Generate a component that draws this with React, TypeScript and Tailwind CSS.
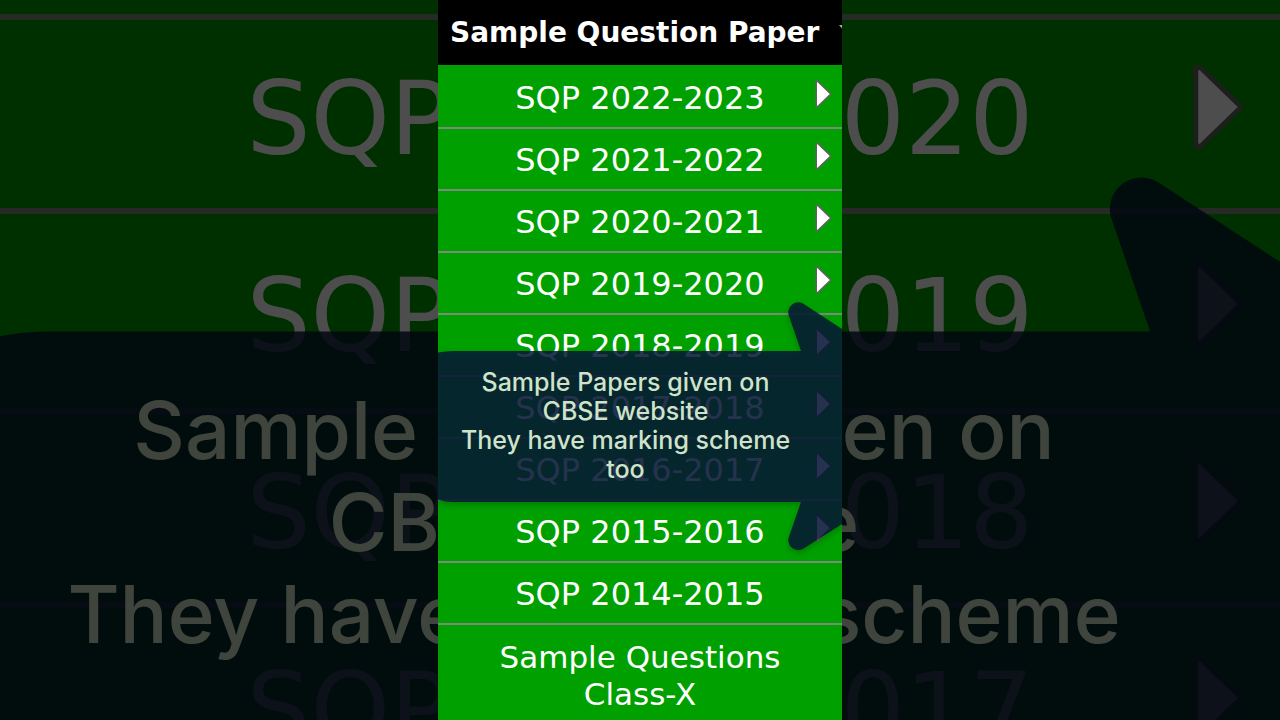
type Entry = { label: string; submenu: boolean };

const papers: Entry[] = [
  { label: "SQP 2022-2023", submenu: true },
  { label: "SQP 2021-2022", submenu: true },
  { label: "SQP 2020-2021", submenu: true },
  { label: "SQP 2019-2020", submenu: true },
  { label: "SQP 2018-2019", submenu: true },
  { label: "SQP 2017-2018", submenu: true },
  { label: "SQP 2016-2017", submenu: true },
  { label: "SQP 2015-2016", submenu: true },
  { label: "SQP 2014-2015", submenu: false },
];

const captionLines = ["Sample Papers given on", "CBSE website", "They have marking scheme", "too"];

function SubmenuArrow({ className }: { className: string }) {
  return (
    <svg viewBox="0 0 17 28" className={className} aria-hidden="true">
      <path d="M1.2 1.4 L2.8 1.4 L15.8 14 L2.8 26.6 L1.2 26.6 Z" fill="#fff" stroke="#5c665c" strokeWidth="1.6" strokeLinejoin="round" />
    </svg>
  );
}

/* Wide translucent arrow that carries the caption. */
function ArrowShape({ className }: { className: string }) {
  return (
    <svg viewBox="0 0 404 250" preserveAspectRatio="none" className={className} aria-hidden="true">
      <path
        d="M0 52.5 Q7 51 16 51 H363 L351.2 16.5 A10 10 0 0 1 366.5 4.5 L404 29 V224 L366.5 248 A10 10 0 0 1 351.2 236 L363 202 H16 Q7 202 0 200 Z"
        fill="#051434"
        fillOpacity="0.84"
      />
    </svg>
  );
}

function Backdrop() {
  return (
    <div aria-hidden="true" className="absolute inset-0 overflow-hidden opacity-30">
      <ul className="bg-[#00a000] font-['DejaVu_Sans',sans-serif] text-[101px] text-white">
        <li className="h-5 border-b-6 border-[#7b8a7b]" />
        {papers.slice(3, 7).map((p) => (
          <li
            key={p.label}
            className="grid grid-cols-[1fr_auto_1fr] items-center border-b-6 border-[#7b8a7b] pt-2.5 odd:h-[200px] even:h-[194px]"
          >
            <span className="col-start-2 whitespace-nowrap leading-none">{p.label}</span>
            <SubmenuArrow className="mr-[35px] mb-6 h-[88px] w-[53px] justify-self-end" />
          </li>
        ))}
      </ul>
      <div className="absolute inset-x-0 top-[170px] flex h-[792px] items-center justify-center pt-1 pr-[92px]">
        <ArrowShape className="absolute inset-0 h-full w-full" />
        <p className="relative text-center font-['Inter',sans-serif] text-[80px] leading-[92px] font-medium whitespace-nowrap text-[#cfe3cb]">
          {captionLines.map((line) => (
            <span key={line} className="block">{line}</span>
          ))}
        </p>
      </div>
    </div>
  );
}

export default function App() {
  return (
    <div className="relative flex h-screen justify-center overflow-hidden bg-black">
      <Backdrop />
      <main className="relative flex aspect-[404/720] h-full flex-col overflow-hidden bg-[#00a000] font-['DejaVu_Sans',sans-serif] text-white">
        <h1 className="flex h-[65px] shrink-0 items-center gap-5 bg-black pl-3 text-[28px] font-bold whitespace-nowrap">
          Sample Question Paper
          <svg viewBox="0 0 14 8" className="mb-2 h-2 w-3.5 shrink-0" aria-hidden="true">
            <path d="M0 0 H14 L7 8 Z" fill="#aaa" />
          </svg>
        </h1>
        <nav aria-label="Sample question papers">
          <ul className="pt-0.5">
            {papers.map((p) => (
              <li key={p.label} className="border-b-2 border-[#7b8a7b]">
                <a href="#" className="grid h-[60px] grid-cols-[1fr_auto_1fr] items-center pt-0.5 text-[32px]">
                  <span className="col-start-2 whitespace-nowrap leading-none">{p.label}</span>
                  {p.submenu && <SubmenuArrow className="mr-2.5 mb-2 h-7 w-[17px] justify-self-end" />}
                </a>
              </li>
            ))}
            <li>
              <a href="#" className="block px-10 pt-3.5 text-center text-[31px] leading-[37px]">
                Sample Questions Class-X
              </a>
            </li>
          </ul>
        </nav>
        <div className="absolute inset-x-0 top-[300px] flex h-[250px] items-center justify-center pt-0.5 pr-[29px]">
          <ArrowShape className="absolute inset-0 h-full w-full overflow-visible drop-shadow-[0_3px_3px_rgba(0,0,0,0.25)]" />
          <p className="relative text-center font-['Inter',sans-serif] text-[25px] leading-[29px] font-medium whitespace-nowrap text-[#cfe3cb]">
            {captionLines.map((line) => (
              <span key={line} className="block">{line}</span>
            ))}
          </p>
        </div>
      </main>
    </div>
  );
}
